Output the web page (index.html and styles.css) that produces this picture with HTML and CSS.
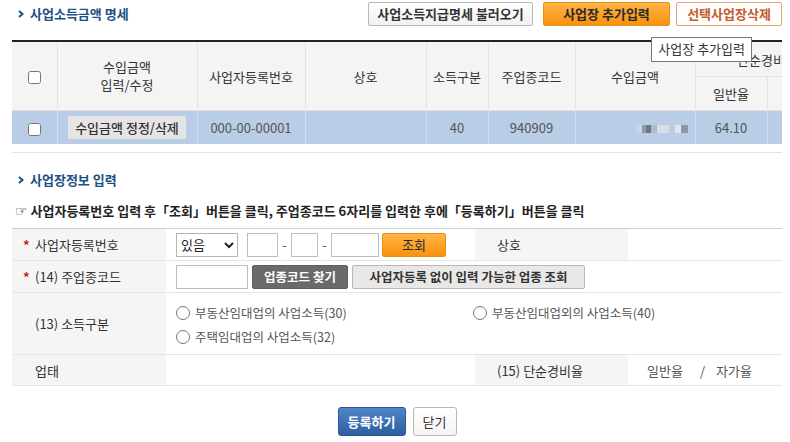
FILE: index.html
```html
<!DOCTYPE html>
<html>
  <head>
    <meta charset="utf-8">
    <link rel="stylesheet" href="styles.css">
  </head>
  <body>
    <div class="page">
      <div class="sec-head">
        <h2 class="sec-title">
          <svg class="chev" width="6" height="8" viewBox="0 0 6 8"><polyline points="1,1 4.5,4 1,7" fill="none" stroke="#1f4f86" stroke-width="2"/></svg>
          사업소득금액 명세
        </h2>
        <div class="top-btns">
          <button class="btn btn-white">사업소득지급명세 불러오기</button>
          <button class="btn btn-orange">사업장 추가입력</button>
          <button class="btn btn-line">선택사업장삭제</button>
        </div>
        <span class="tip">사업장 추가입력</span>
      </div>

      <div class="grid-scroll">
        <table class="grid">
          <colgroup>
            <col style="width:45px"><col style="width:140px"><col style="width:108px"><col style="width:121px">
            <col style="width:62px"><col style="width:87px"><col style="width:120px"><col style="width:72px">
            <col style="width:72px"><col style="width:80px"><col style="width:80px"><col style="width:81px">
          </colgroup>
          <thead>
            <tr class="h1">
              <th rowspan="2"><input type="checkbox" class="chk"></th>
              <th rowspan="2" class="two">수입금액<br>입력/수정</th>
              <th rowspan="2">사업자등록번호</th>
              <th rowspan="2">상호</th>
              <th rowspan="2">소득구분</th>
              <th rowspan="2">주업종코드</th>
              <th rowspan="2">수입금액</th>
              <th colspan="2">단순경비율</th>
              <th colspan="2"></th>
              <th rowspan="2"></th>
            </tr>
            <tr class="h2">
              <th>일반율</th>
              <th></th>
              <th></th>
              <th></th>
            </tr>
          </thead>
          <tbody>
            <tr class="sel">
              <td><input type="checkbox" class="chk"></td>
              <td><button class="btn-edit">수입금액 정정/삭제</button></td>
              <td>000-00-00001</td>
              <td></td>
              <td>40</td>
              <td>940909</td>
              <td class="amt"><span class="blur"></span></td>
              <td>64.10</td>
              <td></td>
              <td></td>
              <td></td>
              <td></td>
            </tr>
          </tbody>
        </table>
      </div>

      <h2 class="sec-title sec-two">
        <svg class="chev" width="6" height="8" viewBox="0 0 6 8"><polyline points="1,1 4.5,4 1,7" fill="none" stroke="#1f4f86" stroke-width="2"/></svg>
        사업장정보 입력
      </h2>
      <p class="guide"><span class="hand">☞</span> 사업자등록번호 입력 후「조회」버튼을 클릭, 주업종코드 6자리를 입력한 후에「등록하기」버튼을 클릭</p>

      <table class="form">
        <colgroup>
          <col style="width:154px"><col style="width:309px"><col style="width:153px"><col>
        </colgroup>
        <tr class="r1">
          <th class="req">사업자등록번호</th>
          <td>
            <div class="line">
              <select class="sel-box"><option>있음</option><option>없음</option></select>
              <input type="text" class="ipt w31">
              <span class="dash">-</span>
              <input type="text" class="ipt w27">
              <span class="dash">-</span>
              <input type="text" class="ipt w48">
              <button class="btn btn-orange btn-find">조회</button>
            </div>
          </td>
          <th class="th-r">상호</th>
          <td></td>
        </tr>
        <tr class="r2">
          <th class="req">(14) 주업종코드</th>
          <td colspan="3">
            <div class="line">
              <input type="text" class="ipt w72">
              <button class="btn btn-dark">업종코드 찾기</button>
              <button class="btn btn-gray">사업자등록 없이 입력 가능한 업종 조회</button>
            </div>
          </td>
        </tr>
        <tr class="r3">
          <th class="plain">(13) 소득구분</th>
          <td colspan="3">
            <div class="radios">
              <label><input type="radio" name="kind">부동산임대업의 사업소득(30)</label>
              <label><input type="radio" name="kind">부동산임대업외의 사업소득(40)</label>
              <label><input type="radio" name="kind">주택임대업의 사업소득(32)</label>
            </div>
          </td>
        </tr>
        <tr class="r4">
          <th class="plain">업태</th>
          <td></td>
          <th class="th-r">(15) 단순경비율</th>
          <td class="rate"><span>일반율</span><span class="slash">/</span><span>자가율</span></td>
        </tr>
      </table>

      <div class="foot-btns">
        <button class="btn btn-blue">등록하기</button>
        <button class="btn btn-close">닫기</button>
      </div>
    </div>
  </body>
</html>
```

FILE: styles.css
```css
body {
  margin: 0;
  font-family: "Noto Sans CJK KR", "Noto Sans", sans-serif;
  font-size: 13px;
  color: #333;
  background: #fff;
}

.page {
  padding: 0 8px 0 12px;
}

button {
  font-family: inherit;
  font-size: 13px;
  cursor: pointer;
}

/* section heading */
.sec-head {
  position: relative;
  display: flex;
  justify-content: space-between;
  align-items: flex-start;
  padding-top: 2px;
  margin-bottom: 14px;
}

.sec-title {
  display: flex;
  align-items: center;
  gap: 6px;
  margin: 0;
  padding-left: 6px;
  font-size: 13px;
  font-weight: 700;
  color: #1f4f86;
  line-height: 24px;
}

.sec-two {
  margin-top: 15px;
}

.top-btns {
  display: flex;
  gap: 10px;
}

.top-btns .btn-line {
  margin-left: -4px;
}

.btn {
  height: 24px;
  padding: 0;
  border-radius: 2px;
  line-height: 22px;
  font-weight: 700;
}

.btn-white {
  width: 165px;
  border: 1px solid #b9b9b9;
  background: linear-gradient(#ffffff, #f1f1f1);
  color: #333;
}

.btn-orange {
  width: 127px;
  border: 1px solid #ec8f0e;
  background: linear-gradient(#ffb446, #f7920f);
  color: #2a2a2a;
}

.btn-line {
  width: 106px;
  border: 1px solid #eba57d;
  background: #fff;
  color: #c55a2b;
}

.tip {
  position: absolute;
  top: 37px;
  right: 30px;
  z-index: 5;
  padding: 0 6px;
  height: 23px;
  line-height: 22px;
  border: 1px solid #777;
  background: #fff;
  color: #333;
  white-space: nowrap;
}

/* list grid */
.grid-scroll {
  overflow-x: auto;
  padding-bottom: 8px;
  border-bottom: 1px solid #e2e2e2;
}

.grid-scroll::-webkit-scrollbar {
  height: 9px;
}

.grid-scroll::-webkit-scrollbar-track {
  background: #fff;
}

.grid-scroll::-webkit-scrollbar-thumb {
  background: #c4c4c4;
  border-radius: 5px;
}

.grid {
  width: 1068px;
  table-layout: fixed;
  border-collapse: collapse;
  border-top: 2px solid #222;
}

.grid th {
  background: #f4f4f4;
  font-weight: 400;
  color: #333;
  line-height: 17px;
  border: 1px solid #e4e4e4;
  border-top: 0;
  text-align: center;
  white-space: nowrap;
}

.grid th.two {
  line-height: 18px;
}

.grid .h1 th {
  height: 32px;
}

.grid .h2 th {
  height: 31px;
}

.grid th:first-child,
.grid td:first-child {
  border-left: 0;
}

.grid td {
  height: 31px;
  text-align: center;
  color: #555;
  border-left: 1px solid #d3deeb;
}

.grid .sel td {
  background: #b9cde6;
}

.chk {
  width: 13px;
  height: 13px;
  margin: 0;
  vertical-align: middle;
}

.btn-edit {
  width: 118px;
  height: 23px;
  padding: 0;
  border: 0;
  border-radius: 2px;
  background: #e5e5e5;
  color: #333;
  font-weight: 500;
}

.grid td.amt {
  text-align: right;
  padding-right: 7px;
}

.blur {
  display: inline-block;
  width: 52px;
  height: 8px;
  vertical-align: middle;
  background: linear-gradient(to right, #c9d3e1 0 6px, #8d99ab 6px 10px, #6b778a 10px 15px, #aeb9ca 15px 21px, #d8dee8 21px 33px, #c2cbd8 33px 39px, #e0e5ee 39px 45px, #8c98aa 45px 52px);
}

/* input form */
.guide {
  margin: 10px 0 8px;
  font-weight: 700;
  color: #222;
  line-height: 18px;
  padding-left: 3px;
}

.hand {
  font-family: "DejaVu Sans", sans-serif;
  font-size: 14px;
}

.form {
  width: 100%;
  table-layout: fixed;
  border-collapse: collapse;
  border-top: 1px solid #cfcfcf;
  border-bottom: 1px solid #cfcfcf;
}

.form th {
  background: #f5f5f5;
  text-align: left;
  font-weight: 400;
  color: #333;
  padding: 0 0 0 11px;
  border-bottom: 1px solid #e6e6e6;
}

.form td {
  padding: 0 0 0 10px;
  border-bottom: 1px solid #e6e6e6;
}

.form th.th-r {
  padding-left: 22px;
}

.form th.plain {
  padding-left: 23px;
}

.form th.req::before {
  content: "*";
  display: inline-block;
  width: 12px;
  color: #b22b2b;
  font-weight: 700;
}

.form .r1 { height: 32px; }
.form .r2 { height: 32px; }
.form .r3 { height: 62px; }
.form .r4 { height: 31px; }

.line {
  display: flex;
  align-items: center;
}

.sel-box {
  width: 62px;
  height: 24px;
  margin-right: 9px;
  border: 1px solid #b5b5b5;
  font-family: inherit;
  font-size: 13px;
  background: #fff;
  color: #222;
}

.ipt {
  height: 24px;
  box-sizing: border-box;
  border: 1px solid #bdbdbd;
  padding: 0 3px;
}

.w31 { width: 31px; }
.w27 { width: 27px; }
.w48 { width: 48px; }
.w72 { width: 72px; margin-right: 4px; }

.dash {
  width: 13px;
  text-align: center;
  color: #555;
}

.btn-find {
  width: 64px;
  margin-left: 3px;
  font-weight: 400;
}

.btn-dark {
  width: 96px;
  border: 1px solid #5e5e5e;
  background: #6a6a6a;
  color: #fff;
  margin-right: 4px;
  font-size: 12.5px;
}

.btn-gray {
  width: 233px;
  border: 1px solid #b8b8b8;
  background: #e8e8e8;
  color: #333;
  font-size: 12.5px;
}

.radios {
  display: grid;
  grid-template-columns: 297px auto;
  row-gap: 8px;
  padding-top: 2px;
  color: #555;
  font-size: 12.5px;
}

.radios label {
  display: flex;
  align-items: center;
  line-height: 16px;
}

.radios input {
  width: 14px;
  height: 14px;
  margin: 0 5px 0 0;
}

.rate {
  color: #555;
}

.form td.rate {
  padding-left: 19px;
}

.rate .slash {
  margin: 0 11px 0 17px;
}

.foot-btns {
  display: flex;
  justify-content: center;
  gap: 7px;
  margin-top: 21px;
}

.btn-blue {
  width: 68px;
  height: 29px;
  border: 1px solid #2b5896;
  border-radius: 3px;
  background: linear-gradient(#4f85c8, #2d5f9f);
  color: #fff;
}

.btn-close {
  width: 44px;
  height: 29px;
  border: 1px solid #b7b7b7;
  border-radius: 3px;
  background: linear-gradient(#fff, #f3f3f3);
  color: #333;
  font-weight: 400;
}
```
